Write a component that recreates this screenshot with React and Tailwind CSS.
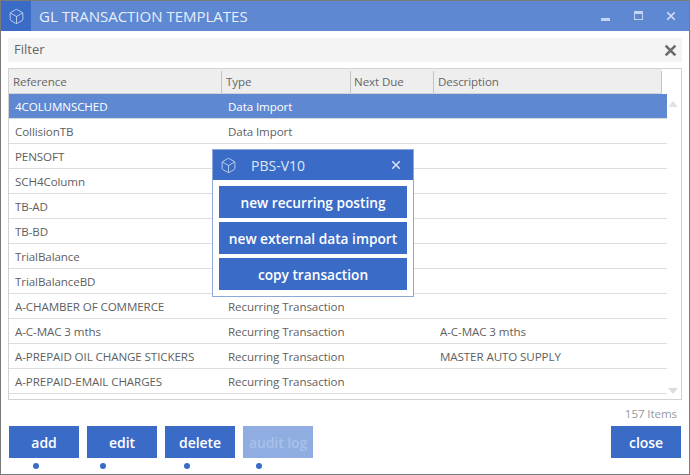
import React from "react";
import { Box } from "lucide-react";

const rows = [
  { ref: "4COLUMNSCHED", type: "Data Import", desc: "" },
  { ref: "CollisionTB", type: "Data Import", desc: "" },
  { ref: "PENSOFT", type: "", desc: "" },
  { ref: "SCH4Column", type: "", desc: "" },
  { ref: "TB-AD", type: "", desc: "" },
  { ref: "TB-BD", type: "", desc: "" },
  { ref: "TrialBalance", type: "", desc: "" },
  { ref: "TrialBalanceBD", type: "", desc: "" },
  { ref: "A-CHAMBER OF COMMERCE", type: "Recurring Transaction", desc: "" },
  { ref: "A-C-MAC 3 mths", type: "Recurring Transaction", desc: "A-C-MAC 3 mths" },
  { ref: "A-PREPAID OIL CHANGE STICKERS", type: "Recurring Transaction", desc: "MASTER AUTO SUPPLY" },
  { ref: "A-PREPAID-EMAIL CHARGES", type: "Recurring Transaction", desc: "" },
];

function XIcon({ className, weight = 2 }) {
  return (
    <svg viewBox="0 0 12 12" className={className} fill="none" stroke="currentColor" strokeWidth={weight}>
      <path d="M1.5 1.5l9 9M10.5 1.5l-9 9" />
    </svg>
  );
}

function FooterButton({ label, dot, disabled }) {
  return (
    <div className="flex flex-col w-[70px]">
      <button
        className={
          disabled
            ? "h-8 bg-[#8fade0] text-[#a9c1e9] text-[14px] font-semibold"
            : "h-8 bg-[#3a6bc7] text-white text-[14px] font-semibold"
        }
      >
        {label}
      </button>
      <span className={"mt-[5px] w-[6px] h-[6px] rounded-full bg-[#3a6bc7] " + dot} />
    </div>
  );
}

function Row({ row, selected }) {
  return (
    <div
      className={
        selected
          ? "flex h-[25px] pt-[2px] items-center bg-[#5f88d2] text-white border-b border-[#d9d9d9]"
          : "flex h-[25px] pt-[2px] items-center text-[#5f5f5f] border-b border-[#dedede]"
      }
    >
      <div className="w-[213px] pl-[6px] truncate">{row.ref}</div>
      <div className="w-[212px] pl-[6px] truncate">{row.type}</div>
      <div className="pl-[6px] truncate">{row.desc}</div>
    </div>
  );
}

export default function App() {
  return (
    <div
      className="relative w-[690px] h-[475px] bg-white border border-[#7a7a7a] flex flex-col overflow-hidden text-[11.6px] tracking-[-0.1px]"
      style={{ fontFamily: '"Open Sans", "Noto Sans", sans-serif' }}
    >
      <div className="h-[30px] flex items-center bg-[#5f88d2] text-white shrink-0">
        <div className="w-[30px] h-[30px] bg-[#3a6bc7] flex items-center justify-center">
          <Box size={17} strokeWidth={1.2} className="text-[#c9d8f2]" />
        </div>
        <div className="ml-2 text-[15px] tracking-normal text-[#e6eefb]">GL TRANSACTION TEMPLATES</div>
        <div className="ml-auto flex items-center text-[#c4d3ef]">
          <div className="w-[9px] h-[3px] bg-current mt-[6px] mr-[24px]" />
          <div className="w-[9px] h-[9px] border border-current border-t-[3px] mr-[23px] mb-[1px]" />
          <XIcon className="w-[10px] h-[10px] mr-[13px] mb-[1px] text-[#d5e0f4]" />
        </div>
      </div>

      <div className="mx-[7px] mt-[7px] h-6 bg-[#f4f4f4] flex items-center justify-between pl-[6px] pr-[5px] text-[#666666] text-[13px] tracking-normal shrink-0">
        <span>Filter</span>
        <XIcon className="w-[13px] h-[13px] text-[#6b6b6b]" weight={2.4} />
      </div>

      <div className="relative mx-[7px] mt-[6px] h-[332px] border border-[#d2d2d2] shrink-0">
        <div className="flex h-[25px] pt-[2px] bg-[#eeeeee] border-b border-[#d2d2d2] text-[#666666] mr-[19px]">
          <div className="w-[213px] pl-[4px] flex items-center border-r border-[#c4c4c4]">Reference</div>
          <div className="w-[129px] pl-[4px] flex items-center border-r border-[#c4c4c4]">Type</div>
          <div className="w-[83px] pl-[3px] flex items-center border-r border-[#c4c4c4]">Next Due</div>
          <div className="flex-1 pl-[4px] flex items-center border-r border-[#c4c4c4]">Description</div>
        </div>
        <div className="mr-[14px]">
          {rows.map((row, i) => (
            <Row key={row.ref} row={row} selected={i === 0} />
          ))}
        </div>
        <div className="absolute right-[3px] top-[32px] w-0 h-0 border-x-[5px] border-x-transparent border-b-[6px] border-b-[#e2e2e2]" />
        <div className="absolute right-[3px] bottom-[5px] w-0 h-0 border-x-[5px] border-x-transparent border-t-[6px] border-t-[#dcdcdc]" />
      </div>

      <div className="mt-[5px] pr-[12px] text-right text-[#999999] h-[18px] leading-[18px] shrink-0">157 Items</div>

      <div className="mt-[3px] mx-[8px] flex gap-2 shrink-0">
        <FooterButton label="add" dot="ml-[24px]" />
        <FooterButton label="edit" dot="ml-[13px]" />
        <FooterButton label="delete" dot="ml-[19px]" />
        <FooterButton label="audit log" dot="ml-[13px]" disabled />
        <button className="ml-auto w-[70px] h-8 bg-[#3a6bc7] text-white text-[14px] font-semibold">close</button>
      </div>

      <div className="absolute left-[211px] top-[148px] w-[202px] h-[148px] bg-white border border-[#8ea8dc] flex flex-col">
        <div className="h-[30px] bg-[#3a6bc7] flex items-center text-white shrink-0">
          <Box size={17} strokeWidth={1.2} className="ml-[7px] text-[#c9d8f2]" />
          <span className="ml-[14px] text-[14px] tracking-normal text-[#dfe8f8]">PBS-V10</span>
          <XIcon className="ml-auto mr-[12px] w-[10px] h-[10px] text-[#d5e0f4]" />
        </div>
        <div className="px-[6px] pt-[6px] flex flex-col gap-1">
          <button className="h-8 pt-[2px] bg-[#3a6bc7] text-white text-[13.7px] tracking-normal font-semibold">new recurring posting</button>
          <button className="h-8 pt-[2px] bg-[#3a6bc7] text-white text-[13.7px] tracking-normal font-semibold">new external data import</button>
          <button className="h-8 pt-[2px] bg-[#3a6bc7] text-white text-[13.7px] tracking-normal font-semibold">copy transaction</button>
        </div>
      </div>
    </div>
  );
}
